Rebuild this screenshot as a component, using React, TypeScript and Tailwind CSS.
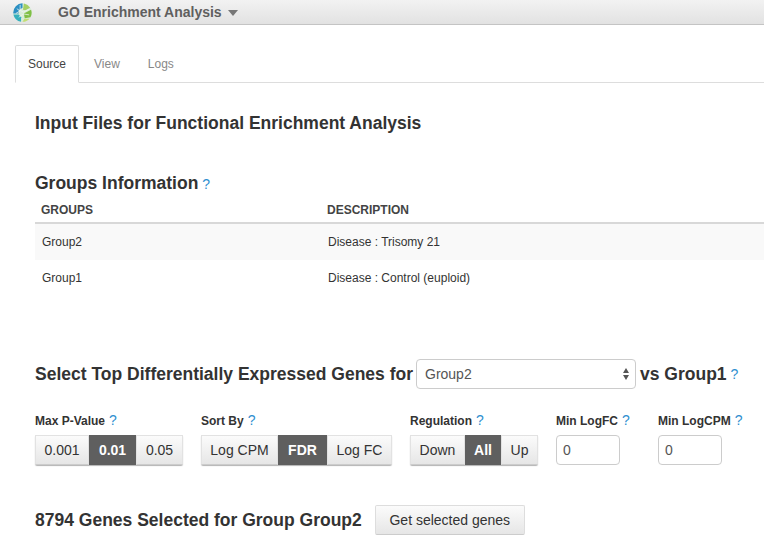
const font = { fontFamily: '"Liberation Sans", Arial, sans-serif' };

function Help() {
  return <span className="text-[#2f8fd0] font-normal ml-[4px]">?</span>;
}

type Item = { label: string; width: string };

function Segmented({ items, active }: { items: Item[]; active: string }) {
  return (
    <div className="flex h-[30px] rounded-[2px] shadow-[0_1px_1px_rgba(0,0,0,0.3)]">
      {items.map((item) =>
        item.label === active ? (
          <div
            key={item.label}
            className={`flex items-center justify-center ${item.width} bg-[#5f5f5f] text-white font-bold text-[14px]`}
          >
            {item.label}
          </div>
        ) : (
          <div
            key={item.label}
            className={`flex items-center justify-center ${item.width} border border-[#e2e2e2] border-b-[#ccc] bg-gradient-to-b from-[#fbfbfb] to-[#e6e6e6] text-[#333] text-[14px]`}
          >
            {item.label}
          </div>
        )
      )}
    </div>
  );
}

function Field({ label, className, children }: { label: string; className: string; children: React.ReactNode }) {
  return (
    <div className={className}>
      <div className="text-[12px] font-bold text-[#333] leading-[14px] mb-[7px] whitespace-nowrap">
        {label}
        <span className="text-[14px]"><Help /></span>
      </div>
      {children}
    </div>
  );
}

function NumberBox() {
  return (
    <div className="w-[64px] h-[30px] border border-[#ccc] rounded-[4px] pl-[6px] flex items-center text-[14px] text-[#555] bg-white">
      0
    </div>
  );
}

function Logo() {
  return (
    <svg width="19" height="19" viewBox="0 0 20 20">
      <circle cx="10" cy="10" r="9.8" fill="#d9ecd8" />
      <path d="M3 3.5A9.8 9.8 0 0 1 10 .2V5L6 7.5V11H.3A9.8 9.8 0 0 1 3 3.5z" fill="#2b8fc4" />
      <path d="M.4 12H6l2.5 3v4.7A9.8 9.8 0 0 1 .4 12z" fill="#35b0bd" />
      <path d="M11.5.4A9.8 9.8 0 0 1 18 5l-5 2.5L10.5 7z" fill="#a5cf63" />
      <path d="M19 7a9.8 9.8 0 0 1-.6 8l-6 1-1-5z" fill="#7fbf45" />
      <path d="M10 19.8l2-3.3h5.5a9.8 9.8 0 0 1-7.5 3.3z" fill="#c3dd74" />
      <path d="M7.5 2v6M3 11l5-3 3 1.5 6-3M6 15l5-3.5 6 1M4 6l3 2" stroke="#eef6ee" strokeWidth="0.8" fill="none" />
    </svg>
  );
}

export default function App() {
  return (
    <div className="w-[764px] h-[553px] overflow-hidden bg-white text-[#333]" style={font}>
      <div className="h-[25px] flex items-center pl-[13px] bg-gradient-to-b from-[#f2f2f2] to-[#e2e2e2] border-b border-[#c4c4c4]">
        <Logo />
        <span className="ml-[26px] text-[14px] font-bold text-[#5f5f5f]">GO Enrichment Analysis</span>
        <span className="ml-[6px] mt-[2px] w-0 h-0 border-x-[5px] border-x-transparent border-t-[6px] border-t-[#777]" />
      </div>

      <div className="mt-[20px] ml-[15px] h-[38px] flex border-b border-[#ddd]">
        <div className="w-[64px] h-[38px] flex items-center justify-center bg-white border border-[#ddd] border-b-white rounded-t-[2px] text-[12px] text-[#444]">
          Source
        </div>
        <div className="ml-[15px] h-[37px] flex items-center text-[12px] text-[#888]">View</div>
        <div className="ml-[28px] h-[37px] flex items-center text-[12px] text-[#888]">Logs</div>
      </div>

      <div className="pl-[35px]">
        <h1 className="mt-[30px] text-[17.5px] leading-[20px] font-bold">Input Files for Functional Enrichment Analysis</h1>

        <h2 className="mt-[40px] text-[17.5px] leading-[20px] font-bold">
          Groups Information<span className="text-[14px]"><Help /></span>
        </h2>

        <div className="mt-[4px] text-[12px]">
          <div className="h-[26px] flex items-center border-b-2 border-[#d8d8d8] font-bold text-[#444]">
            <span className="w-[292px] pl-[6px]">GROUPS</span>
            <span>DESCRIPTION</span>
          </div>
          <div className="h-[36px] flex items-center bg-[#f9f9f9]">
            <span className="w-[293px] pl-[7px]">Group2</span>
            <span>Disease : Trisomy 21</span>
          </div>
          <div className="h-[36px] flex items-center">
            <span className="w-[293px] pl-[7px]">Group1</span>
            <span>Disease : Control (euploid)</span>
          </div>
        </div>

        <div className="mt-[63px] h-[30px] flex items-center text-[17.5px] font-bold whitespace-nowrap">
          <span>Select Top Differentially Expressed Genes for</span>
          <div className="ml-[3px] w-[220px] h-[30px] border border-[#ccc] rounded-[4px] pl-[8px] pr-[6px] flex items-center justify-between text-[14px] font-normal text-[#555] bg-white">
            <span>Group2</span>
            <span className="flex flex-col gap-[2px]">
              <span className="w-0 h-0 border-x-[3.5px] border-x-transparent border-b-[5px] border-b-[#555]" />
              <span className="w-0 h-0 border-x-[3.5px] border-x-transparent border-t-[5px] border-t-[#555]" />
            </span>
          </div>
          <span className="ml-[4px]">vs Group1</span>
          <span className="text-[14px]"><Help /></span>
        </div>

        <div className="mt-[24px] flex">
          <Field label="Max P-Value" className="w-[166px]">
            <div className="w-fit">
              <Segmented
                items={[
                  { label: "0.001", width: "w-[54px]" },
                  { label: "0.01", width: "w-[47px]" },
                  { label: "0.05", width: "w-[47px]" },
                ]}
                active="0.01"
              />
            </div>
          </Field>
          <Field label="Sort By" className="w-[209px]">
            <div className="w-fit">
              <Segmented
                items={[
                  { label: "Log CPM", width: "w-[77px]" },
                  { label: "FDR", width: "w-[49px]" },
                  { label: "Log FC", width: "w-[65px]" },
                ]}
                active="FDR"
              />
            </div>
          </Field>
          <Field label="Regulation" className="w-[146px]">
            <div className="w-fit">
              <Segmented
                items={[
                  { label: "Down", width: "w-[55px]" },
                  { label: "All", width: "w-[36px]" },
                  { label: "Up", width: "w-[37px]" },
                ]}
                active="All"
              />
            </div>
          </Field>
          <Field label="Min LogFC" className="w-[102px]"><NumberBox /></Field>
          <Field label="Min LogCPM" className="w-[100px]"><NumberBox /></Field>
        </div>

        <div className="mt-[40px] h-[30px] flex items-center">
          <span className="text-[17.5px] font-bold">8794 Genes Selected for Group Group2</span>
          <div className="ml-[13px] h-[30px] w-[150px] justify-center flex items-center border border-[#ddd] border-b-[#ccc] rounded-[2px] bg-gradient-to-b from-[#fbfbfb] to-[#e6e6e6] text-[14px] text-[#333]">
            Get selected genes
          </div>
        </div>
      </div>
    </div>
  );
}
